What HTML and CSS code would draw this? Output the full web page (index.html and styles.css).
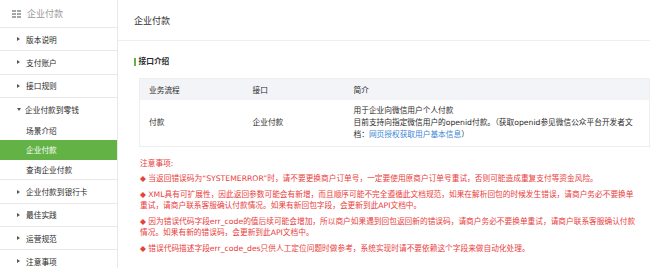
FILE: index.html
```html
<!DOCTYPE html>
<html lang="zh-CN">
<head>
<meta charset="utf-8">
<title>企业付款</title>
<link rel="stylesheet" href="styles.css">
</head>
<body>
<div class="layout">
  <aside class="sidebar">
    <div class="brand">
      <svg class="brand-icon" width="9" height="8" viewBox="0 0 9 8">
        <rect x="0" y="0" width="4" height="2" fill="#a6a6a6"/>
        <rect x="5" y="0" width="4" height="2" fill="#a6a6a6"/>
        <rect x="0" y="3" width="4" height="2" fill="#a6a6a6"/>
        <rect x="5" y="3" width="4" height="2" fill="#a6a6a6"/>
        <rect x="0" y="6" width="4" height="2" fill="#a6a6a6"/>
        <rect x="5" y="6" width="4" height="2" fill="#a6a6a6"/>
      </svg>
      <span>企业付款</span>
    </div>
    <ul class="nav">
      <li class="nav-item"><div class="nav-head"><span class="caret"></span>版本说明</div></li>
      <li class="nav-item"><div class="nav-head"><span class="caret"></span>支付账户</div></li>
      <li class="nav-item"><div class="nav-head"><span class="caret"></span>接口规则</div></li>
      <li class="nav-item">
        <div class="nav-head"><span class="caret caret-down"></span>企业付款到零钱</div>
        <ul class="sub">
          <li class="sub-item">场景介绍</li>
          <li class="sub-item active">企业付款</li>
          <li class="sub-item">查询企业付款</li>
        </ul>
      </li>
      <li class="nav-item"><div class="nav-head"><span class="caret"></span>企业付款到银行卡</div></li>
      <li class="nav-item"><div class="nav-head"><span class="caret"></span>最佳实践</div></li>
      <li class="nav-item"><div class="nav-head"><span class="caret"></span>运营规范</div></li>
      <li class="nav-item"><div class="nav-head"><span class="caret"></span>注意事项</div></li>
    </ul>
  </aside>
  <main class="main">
    <header class="page-head">企业付款</header>
    <section class="content">
      <h2 class="sec-title">接口介绍</h2>
      <table class="api-table">
        <colgroup>
          <col class="col-flow">
          <col class="col-api">
          <col>
        </colgroup>
        <thead>
          <tr><th>业务流程</th><th>接口</th><th>简介</th></tr>
        </thead>
        <tbody>
          <tr>
            <td>付款</td>
            <td>企业付款</td>
            <td>用于企业向微信用户个人付款<br>目前支持向指定微信用户的openid付款。（获取openid参见微信公众平台开发者文档：<a class="link" href="#">网页授权获取用户基本信息</a>）</td>
          </tr>
        </tbody>
      </table>
      <div class="notes">
        <p class="notes-title">注意事项:</p>
        <p>◆ 当返回错误码为“SYSTEMERROR”时，请不要更换商户订单号，一定要使用原商户订单号重试，否则可能造成重复支付等资金风险。</p>
        <p>◆ XML具有可扩展性，因此返回参数可能会有新增，而且顺序可能不完全遵循此文档规范，如果在解析回包的时候发生错误，请商户务必不要换单重试，请商户联系客服确认付款情况。如果有新回包字段，会更新到此API文档中。</p>
        <p>◆ 因为错误代码字段err_code的值后续可能会增加，所以商户如果遇到回包返回新的错误码，请商户务必不要换单重试，请商户联系客服确认付款情况。如果有新的错误码，会更新到此API文档中。</p>
        <p>◆ 错误代码描述字段err_code_des只供人工定位问题时做参考，系统实现时请不要依赖这个字段来做自动化处理。</p>
      </div>
    </section>
  </main>
</div>
</body>
</html>
```
FILE: styles.css
```css
html, body {
  margin: 0;
  padding: 0;
  height: 268px;
  overflow: hidden;
  background: #fff;
}
body {
  font-family: "DejaVu Sans", "Noto Sans CJK SC", sans-serif;
  font-size: 7.7px;
  color: #2b2b2b;
}
.layout {
  display: flex;
  height: 268px;
}
.sidebar {
  width: 117px;
  flex: none;
  border-right: 1px solid #e8e8e8;
}
.brand {
  height: 27px;
  border-bottom: 1px solid #e8e8e8;
  display: flex;
  align-items: center;
  padding-left: 12px;
  gap: 6px;
  color: #9a9a9a;
  font-size: 9px;
}
.brand-icon { display: block; }
.nav, .sub {
  list-style: none;
  margin: 0;
  padding: 0;
}
.nav-item {
  border-bottom: 1px solid #e8e8e8;
}
.nav-head {
  height: 22.3px;
  display: flex;
  align-items: center;
  padding-left: 17px;
}
.caret {
  width: 0;
  height: 0;
  border-left: 3px solid #555;
  border-top: 2.5px solid transparent;
  border-bottom: 2.5px solid transparent;
  margin-right: 6px;
}
.caret-down {
  border-left: 2.5px solid transparent;
  border-right: 2.5px solid transparent;
  border-top: 3px solid #555;
  border-bottom: 0;
  margin-right: 4px;
}
.sub-item {
  height: 19.75px;
  display: flex;
  align-items: center;
  padding-left: 26px;
}
.sub-item.active {
  background: #62b246;
  color: #fff;
}
.main {
  flex: 1;
  min-width: 0;
}
.page-head {
  height: 40px;
  border-bottom: 1px solid #efefef;
  padding-left: 16px;
  display: flex;
  align-items: center;
  font-size: 9px;
  color: #333;
}
.content {
  padding: 16px 0 0 16px;
}
.sec-title {
  margin: 0;
  font-size: 7.7px;
  font-weight: bold;
  line-height: 10px;
  display: flex;
  align-items: center;
  gap: 3px;
}
.sec-title::before {
  content: "";
  width: 1.5px;
  height: 8px;
  background: #62b246;
}
.api-table {
  margin: 11px 0 0 5px;
  width: calc(100% - 5px);
  border-collapse: collapse;
  table-layout: fixed;
  border: 1px solid #eeeeee;
}
.col-flow { width: 104px; }
.col-api { width: 101px; }
.api-table th {
  background: #f3f4f8;
  height: 21px;
  padding: 0 9px;
  text-align: left;
  font-weight: normal;
}
.api-table td {
  padding: 5px 9px;
  line-height: 12px;
  vertical-align: middle;
}
.link {
  color: #3d86d4;
  text-decoration: none;
}
.notes {
  margin: 10.5px 10px 0 6px;
  color: #e8403c;
  line-height: 11.5px;
}
.notes p {
  margin: 4px 0 0;
}
.notes .notes-title {
  margin: 0;
}
```
